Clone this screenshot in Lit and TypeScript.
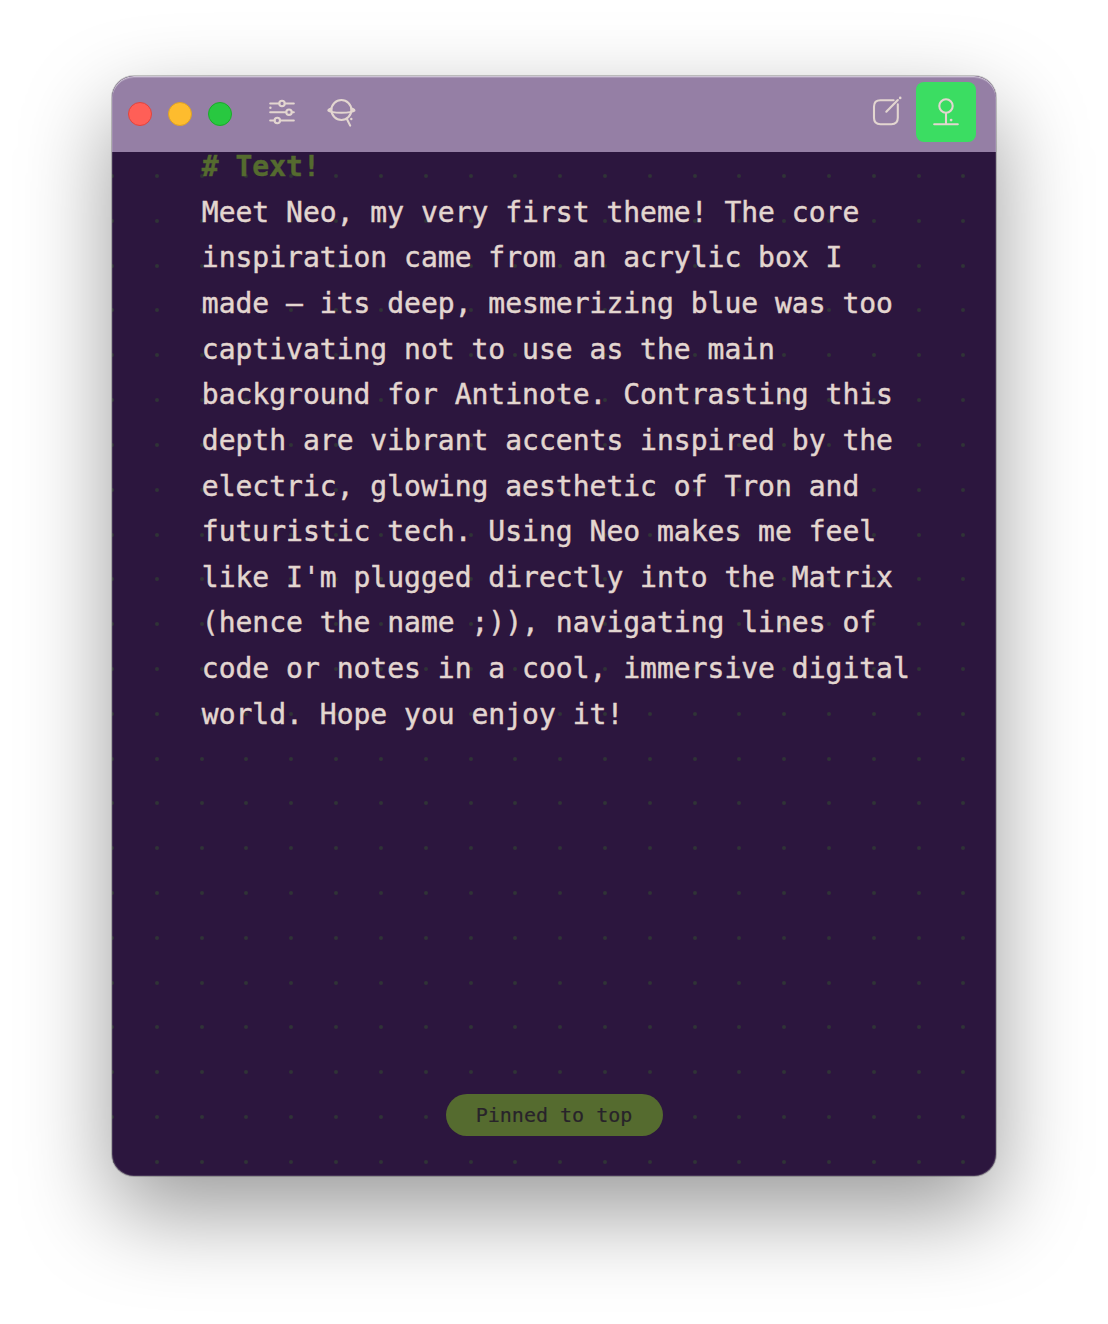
import { LitElement, html, css, svg } from "lit";
import { customElement } from "lit/decorators.js";

const DOT_PITCH = 44.8;
const dots: { x: number; y: number }[] = [];
for (let row = 0; row < 23; row++) {
  for (let col = 0; col < 20; col++) {
    dots.push({
      x: Math.round(col * DOT_PITCH + 0.1),
      y: Math.round(24.1 + row * DOT_PITCH),
    });
  }
}

const lines = [
  "Meet Neo, my very first theme! The core",
  "inspiration came from an acrylic box I",
  "made — its deep, mesmerizing blue was too",
  "captivating not to use as the main",
  "background for Antinote. Contrasting this",
  "depth are vibrant accents inspired by the",
  "electric, glowing aesthetic of Tron and",
  "futuristic tech. Using Neo makes me feel",
  "like I'm plugged directly into the Matrix",
  "(hence the name ;)), navigating lines of",
  "code or notes in a cool, immersive digital",
  "world. Hope you enjoy it!",
];

@customElement("title-bar")
export class TitleBar extends LitElement {
  static styles = css`
    :host {
      display: flex;
      align-items: flex-start;
      height: 76px;
      flex: none;
      box-sizing: border-box;
      padding: 6px 20px 0 16px;
      background: #957fa5;
    }
    .lights {
      display: flex;
      gap: 16px;
      padding-top: 20px;
    }
    .light {
      width: 24px;
      height: 24px;
      border-radius: 50%;
      box-sizing: border-box;
      border: 1px solid;
    }
    .close {
      background: #ff5f57;
      border-color: #e0443e;
    }
    .minimize {
      background: #febc2e;
      border-color: #dea123;
    }
    .zoom {
      background: #28c840;
      border-color: #1aab29;
    }
    .tool {
      width: 60px;
      height: 60px;
      display: block;
      fill: none;
      stroke: #e3d6d0;
      stroke-width: 2.1;
      stroke-linecap: round;
      stroke-linejoin: round;
    }
    .left {
      display: flex;
      margin-left: 20px;
    }
    .right {
      display: flex;
      margin-left: auto;
    }
    .active {
      background: #3bdd62;
      border-radius: 8px;
    }
    .speck {
      fill: #e3d6d0;
      stroke: none;
    }
  `;

  render() {
    return html`
      <div class="lights">
        <span class="light close"></span>
        <span class="light minimize"></span>
        <span class="light zoom"></span>
      </div>
      <div class="left">
        <svg class="tool" viewBox="0 0 60 60">
          <path d="M18.2 21.5H27.2M32.8 21.5H41.8M18.2 30.2H34.2M39.8 30.2H41.8M18.2 38.5H22.5M28.1 38.5H41.8" />
          <circle cx="30" cy="21.5" r="2.7" />
          <circle cx="37" cy="30.2" r="2.7" />
          <circle cx="25.3" cy="38.5" r="2.7" />
          <circle class="speck" cx="18.4" cy="25.8" r="1.2" />
        </svg>
        <svg class="tool" viewBox="0 0 60 60">
          <circle cx="29.4" cy="28" r="10" />
          <path d="M19.2 26.4C17.2 27.1 16.2 27.9 16.4 28.6C19 31.4 39.8 31.4 42.4 28.6C42.6 27.9 41.6 27.1 39.6 26.4" />
          <path d="M17 28.4L19.2 27.8M41.8 28.4L39.6 27.8" />
          <path d="M35 37.2L38.2 43.6" />
          <circle class="speck" cx="39.3" cy="37" r="1.2" />
        </svg>
      </div>
      <div class="right">
        <svg class="tool" viewBox="0 0 60 60">
          <path d="M37.6 18.2H24.4Q18 18.2 18 24.6V35.7Q18 42.2 24.4 42.2H35.4Q41.8 42.2 41.8 35.7V22.4" />
          <path d="M30.3 29.7L41.8 18" />
          <circle class="speck" cx="44.2" cy="15.9" r="1.3" />
        </svg>
        <svg class="tool active" viewBox="0 0 60 60">
          <circle cx="30" cy="24" r="6.7" />
          <path d="M30 31V42M18.2 42.2H41.8" />
          <circle class="speck" cx="35.1" cy="38.1" r="1.4" />
        </svg>
      </div>
    `;
  }
}

@customElement("app-root")
export class AppRoot extends LitElement {
  static styles = css`
    :host {
      display: block;
      box-sizing: border-box;
      width: 1108px;
      height: 1324px;
      padding: 76px 112px 148px;
      background: #fff;
      overflow: hidden;
    }
    .window {
      position: relative;
      display: flex;
      flex-direction: column;
      height: 1100px;
      border-radius: 22px;
      overflow: hidden;
      background: #2c163e;
      box-shadow: 0 0 0 1px rgba(0, 0, 0, 0.2),
        0 36px 90px rgba(0, 0, 0, 0.4);
    }
    .window::after {
      content: "";
      position: absolute;
      inset: 0;
      border-radius: 22px;
      box-shadow: inset 0 0 0 1px rgba(255, 255, 255, 0.12),
        inset 0 1px 0 rgba(255, 255, 255, 0.35),
        inset 0 2px 0 rgba(255, 255, 255, 0.2);
    }
    .note {
      position: relative;
      flex: 1;
      display: flex;
      flex-direction: column;
      align-items: flex-start;
      font-family: "DejaVu Sans Mono", monospace;
    }
    .grid {
      position: absolute;
      inset: 0;
      width: 884px;
      height: 1024px;
      fill: #303337;
    }
    .text {
      position: relative;
      padding-left: 89.8px;
      font-size: 28px;
      line-height: 45.64px;
      color: #e3d6d0;
      -webkit-text-stroke: 0.45px currentColor;
    }
    .line {
      white-space: pre;
    }
    .heading {
      margin-bottom: 8px;
      font-weight: 700;
      line-height: 29.7px;
      color: #556b2f;
    }
    .toast {
      position: relative;
      margin: auto auto 40px;
      width: 217px;
      height: 42px;
      border-radius: 21px;
      background: #556b2f;
      color: #28232a;
      font-size: 20px;
      line-height: 42px;
      text-align: center;
      -webkit-text-stroke: 0.2px currentColor;
    }
  `;

  render() {
    return html`
      <div class="window">
        <title-bar></title-bar>
        <div class="note">
          <svg class="grid" viewBox="0 0 884 1024">
            ${dots.map((d) => svg`<circle cx=${d.x} cy=${d.y} r="2" />`)}
          </svg>
          <div class="text">
            <div class="line heading"># Text!</div>
            ${lines.map((line) => html`<div class="line">${line}</div>`)}
          </div>
          <div class="toast">Pinned to top</div>
        </div>
      </div>
    `;
  }
}
